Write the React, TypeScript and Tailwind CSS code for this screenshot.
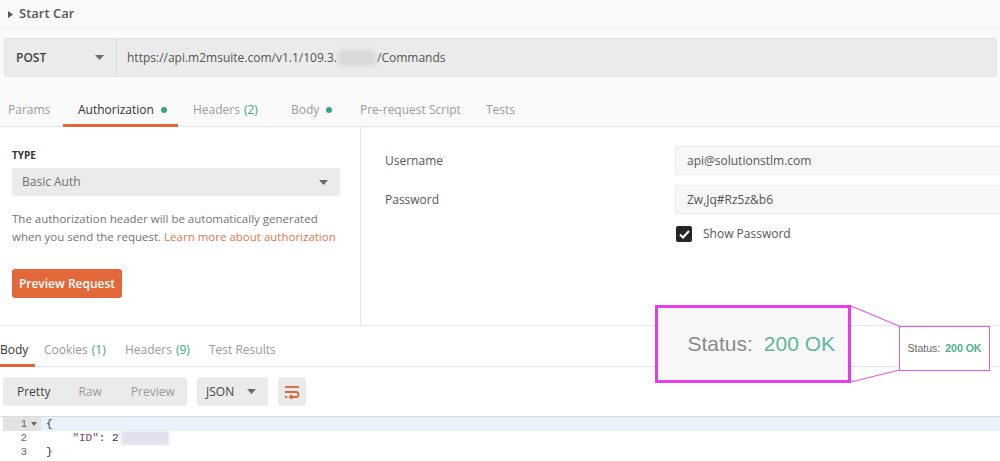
import React from "react";

const font = { fontFamily: '"Open Sans", "Liberation Sans", sans-serif' };

function Caret({ className }: { className?: string }) {
  return (
    <svg width="9" height="5" viewBox="0 0 9 5" className={className}>
      <path d="M0 0 L9 0 L4.5 5 Z" fill="#6b6b6b" />
    </svg>
  );
}

function Dot() {
  return <span className="ml-[7px] inline-block h-[6px] w-[6px] rounded-full bg-[#34a77a]" />;
}

const requestTabs = [
  { label: "Params", w: "w-[63px]", pl: "pl-[8px]" },
  { label: "Authorization", w: "w-[115px]", pl: "pl-[15px]", active: true, dot: true },
  { label: "Headers", count: "(2)", w: "w-[98px]", pl: "pl-[15px]" },
  { label: "Body", w: "w-[69px]", pl: "pl-[15px]", dot: true },
  { label: "Pre-request Script", w: "w-[126px]", pl: "pl-[15px]" },
  { label: "Tests", w: "w-[60px]", pl: "pl-[15px]" },
];

export default function App() {
  return (
    <div className="relative h-[461px] w-[1000px] overflow-hidden bg-white text-[#505050]" style={font}>
      {/* title */}
      <div className="flex h-[29px] items-center border-b border-[#ececec] bg-[#fafafa] pl-[8px]">
        <svg width="5" height="7" viewBox="0 0 5 7" className="mr-[6px]">
          <path d="M0 0 L5 3.5 L0 7 Z" fill="#555" />
        </svg>
        <span className="text-[13px] font-semibold text-[#555]">Start Car</span>
      </div>

      {/* url bar */}
      <div className="bg-[#fafafa] pb-[10px] pl-[4px] pr-[3px] pt-[9px]">
        <div className="flex h-[39px] rounded-[3px] border border-[#e2e2e2] bg-[#ebebeb]">
          <div className="flex w-[112px] items-center justify-between border-r border-[#d9d9d9] pl-[11px] pr-[12px]">
            <span className="text-[12px] font-semibold text-[#444]">POST</span>
            <Caret />
          </div>
          <div className="relative flex items-center pl-[10px] text-[12px] text-[#555]">
            <span>https://api.m2msuite.com/v1.1/109.3.</span>
            <span className="mx-[1px] h-[16px] w-[38px] rounded bg-[#d9d9d9] blur-[2px]" />
            <span>/Commands</span>
          </div>
        </div>
      </div>

      {/* request tabs */}
      <div className="flex h-[40px] border-b border-[#e4e4e4] bg-[#fafafa] pt-[6px] text-[12px]">
        {requestTabs.map((t) => (
          <div
            key={t.label}
            className={`relative flex items-center ${t.w} ${t.pl} ${t.active ? "text-[#333]" : "text-[#9a9a9a]"}`}
          >
            <span>{t.label}</span>
            {t.count && <span className="ml-[4px] text-[#3aa87d]">{t.count}</span>}
            {t.dot && <Dot />}
            {t.active && <span className="absolute bottom-[-1px] left-0 right-0 h-[3px] bg-[#e2683a]" />}
          </div>
        ))}
      </div>

      {/* auth content */}
      <div className="flex h-[199px] border-b border-[#e6e6e6]">
        <div className="w-[361px] border-r border-[#e6e6e6] px-[12px] pt-[22px]">
          <div className="text-[10px] font-bold leading-[12px] text-[#333]">TYPE</div>
          <div className="mt-[7px] flex h-[28px] w-[328px] items-center justify-between rounded-[3px] bg-[#ebebeb] pl-[10px] pr-[12px] text-[12px] text-[#707070]">
            <span>Basic Auth</span>
            <Caret />
          </div>
          <p className="mt-[14px] whitespace-nowrap text-[11.5px] leading-[18px] text-[#737373]">
            The authorization header will be automatically generated
            <br />
            when you send the request. <span className="text-[#e0764c]">Learn more about authorization</span>
          </p>
          <button className="mt-[23px] flex h-[29px] w-[110px] items-center justify-center rounded-[3px] bg-[#e2683a] text-[12px] font-semibold text-white">
            Preview Request
          </button>
        </div>
        <div className="flex-1 pt-[19px]">
          <div className="flex h-[29px] items-center">
            <span className="w-[314px] pl-[24px] text-[12px] text-[#555]">Username</span>
            <div className="flex h-[29px] flex-1 items-center rounded-l-[3px] border border-r-0 border-[#eeeeee] bg-[#f7f7f7] pl-[11px] text-[12px] text-[#555]">
              api@solutionstlm.com
            </div>
          </div>
          <div className="mt-[10px] flex h-[29px] items-center">
            <span className="w-[314px] pl-[24px] text-[12px] text-[#555]">Password</span>
            <div className="flex h-[29px] flex-1 items-center rounded-l-[3px] border border-r-0 border-[#eeeeee] bg-[#f7f7f7] pl-[11px] text-[12px] text-[#555]">
              Zw,Jq#Rz5z&amp;b6
            </div>
          </div>
          <div className="mt-[11px] flex items-center pl-[315px]">
            <span className="flex h-[16px] w-[16px] items-center justify-center rounded-[2px] bg-[#262626]">
              <svg width="11" height="9" viewBox="0 0 11 9">
                <path d="M1 4.5 L4 7.5 L10 1" stroke="#fff" strokeWidth="2" fill="none" />
              </svg>
            </span>
            <span className="ml-[11px] text-[12px] text-[#555]">Show Password</span>
          </div>
        </div>
      </div>

      {/* response tabs */}
      <div className="flex h-[41px] border-b border-[#e4e4e4] pt-[8px] text-[12px]">
        <div className="relative flex w-[44px] items-center text-[#333]">
          <span>Body</span>
          <span className="absolute bottom-[-1px] left-0 h-[3px] w-[35px] bg-[#e2683a]" />
        </div>
        <div className="flex w-[81px] items-center text-[#9a9a9a]">
          Cookies<span className="ml-[4px] text-[#3aa87d]">(1)</span>
        </div>
        <div className="flex w-[84px] items-center text-[#9a9a9a]">
          Headers<span className="ml-[4px] text-[#3aa87d]">(9)</span>
        </div>
        <div className="flex items-center text-[#9a9a9a]">Test Results</div>
      </div>

      {/* toolbar */}
      <div className="flex gap-[10px] pl-[3px] pt-[10px] text-[12px]">
        <div className="flex h-[29px] w-[184px] items-center rounded-[3px] bg-[#ebebeb] pl-[14px]">
          <span className="text-[#444]">Pretty</span>
          <span className="ml-[28px] text-[#9a9a9a]">Raw</span>
          <span className="ml-[29px] text-[#9a9a9a]">Preview</span>
        </div>
        <div className="flex h-[29px] w-[71px] items-center justify-between rounded-[3px] bg-[#ebebeb] pl-[9px] pr-[12px] text-[#444]">
          <span>JSON</span>
          <Caret />
        </div>
        <div className="flex h-[29px] w-[28px] items-center justify-center rounded-[3px] bg-[#ebebeb]">
          <svg width="16" height="14" viewBox="0 0 16 14" fill="none" stroke="#d9663c" strokeWidth="1.8">
            <path d="M1 2 H15" />
            <path d="M1 7 H12 a2.5 2.5 0 0 1 0 5 H6" />
            <path d="M8 10 L6 12 L8 14" />
            <path d="M1 12 H3" />
          </svg>
        </div>
      </div>

      {/* code */}
      <div
        className="mt-[10px] border-t border-[#dcdcdc] pl-[3px] text-[11px] leading-[14px] text-[#333]"
        style={{ fontFamily: '"Liberation Mono", "DejaVu Sans Mono", monospace' }}
      >
        <div className="flex h-[14px] bg-[#e8f2fc]">
          <div className="flex w-[38px] items-center justify-end bg-[#e3e3e3] pr-[4px] text-[#666]">
            1<svg width="6" height="4" viewBox="0 0 6 4" className="ml-[4px]"><path d="M0 0 H6 L3 4 Z" fill="#666" /></svg>
          </div>
          <span className="pl-[5px]">{"{"}</span>
        </div>
        <div className="flex h-[14px]">
          <div className="w-[38px] pr-[14px] text-right text-[#666]">2</div>
          <span className="whitespace-pre pl-[5px]">
            {"    "}
            <span className="text-[#8a3a6e]">"ID"</span>: 2
          </span>
          <span className="ml-[2px] h-[14px] w-[48px] bg-[#e2e2ee] blur-[1px]" />
        </div>
        <div className="flex h-[14px]">
          <div className="w-[38px] pr-[14px] text-right text-[#666]">3</div>
          <span className="pl-[5px]">{"}"}</span>
        </div>
      </div>

      {/* magenta annotation overlay */}
      <div
        className="absolute left-[655px] top-[305px] flex h-[78px] w-[196px] items-center justify-end border-[3px] border-[#e43ee8] bg-[#f8f8f8] pr-[13px] text-[21px]"
        style={{ fontFamily: '"Liberation Sans", Arial, sans-serif' }}
      >
        <span className="text-[#8a8a8a]">Status:</span>
        <span className="ml-[11px] text-[#5db896]">200 OK</span>
      </div>
      <svg className="absolute left-[849px] top-[304px]" width="52" height="80" viewBox="0 0 52 80">
        <line x1="2" y1="2" x2="50" y2="22" stroke="#e05ce4" strokeWidth="1.2" />
        <line x1="2" y1="78" x2="50" y2="66" stroke="#e05ce4" strokeWidth="1.2" />
      </svg>
      <div
        className="absolute left-[899px] top-[326px] flex h-[45px] w-[91px] items-center justify-center border border-[#e05ce4] bg-white text-[10.5px]"
        style={{ fontFamily: '"Liberation Sans", Arial, sans-serif' }}
      >
        <span className="text-[#666]">Status:</span>
        <span className="ml-[5px] font-bold text-[#4fae8a]">200 OK</span>
      </div>
    </div>
  );
}
